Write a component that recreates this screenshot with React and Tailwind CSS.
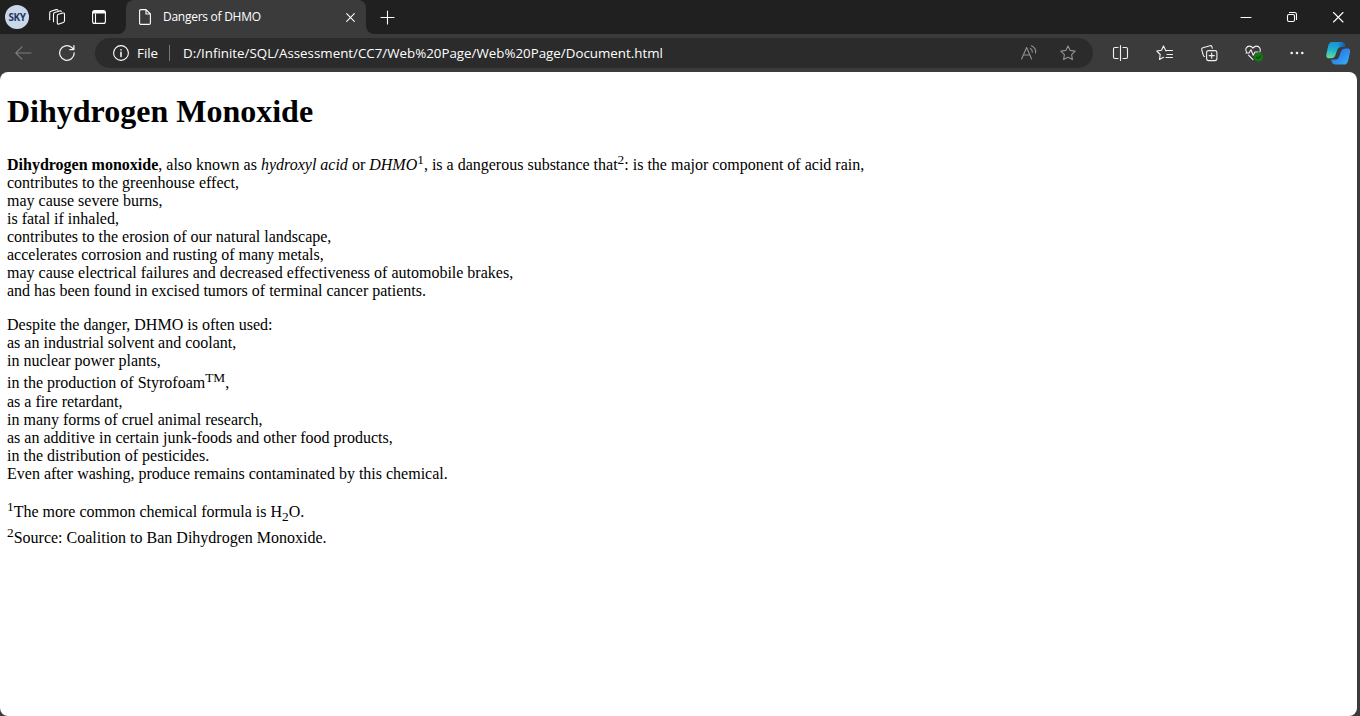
const lineIcon = {
  fill: "none",
  stroke: "currentColor",
  strokeWidth: 1.1,
  strokeLinecap: "round",
  strokeLinejoin: "round",
};

const STAR = "M8 .9 10.2 5.4 15.2 6.1 11.6 9.6 12.4 14.6 8 12.2 3.6 14.6 4.4 9.6 .8 6.1 5.8 5.4Z";
const COPILOT_HALF = "M5.500 0H15.500Q18.500.2 19.200 5H14.500Q12.300 5 11.300 7.800L9.300 13.500Q8.300 16.200 5 16.200H2.500Q0 16 .3 12.500L2.200 4Q3.200.3 5.500 0Z";

function Icon({ children, w = 16, h = 16, className = "" }) {
  return (
    <svg width={w} height={h} viewBox={`0 0 ${w} ${h}`} className={`block shrink-0 overflow-visible ${className}`} {...lineIcon}>
      {children}
    </svg>
  );
}

function TitleBar() {
  return (
    <div className="flex h-[34px] shrink-0 bg-[#202020] text-white">
      <div className="flex w-[126px] shrink-0 items-center pl-[5px]">
        <div className="flex size-6 items-center justify-center rounded-full bg-[#c9d7e9] font-['Open_Sans',sans-serif] text-[10px] font-bold tracking-[-0.4px] text-[#1f3864]">
          SKY
        </div>
        <Icon className="ml-5">
          <path d="M9.300 5.300 14 4Q15.500 3.700 15.500 5.200V11.800Q15.500 13 14.300 13.400L10 15Q8.300 15.500 8.300 13.800V6.700Q8.300 5.600 9.300 5.300Z" />
          <path d="M4.500 12.800V5.200Q4.500 3.900 5.700 3.500L10.700 2Q12 1.700 12.300 2.700M.7 10.700V3.900Q.7 2.600 1.900 2.200L7.200.6Q8.500.2 8.900 1.200" />
        </Icon>
        <Icon w={14} h={14} className="ml-[27px]">
          <rect x=".6" y=".6" width="12.8" height="12.8" rx="2" />
          <path d="M1 1.5Q1 1 2 1H12Q13 1 13 1.500V3.500H1Z" fill="currentColor" stroke="none" />
          <path d="M3.500 4V13" />
        </Icon>
      </div>
      <div className="relative flex w-[240px] shrink-0 items-center rounded-t-lg bg-[#3b3b3b] pl-[13px]">
        <svg width="8" height="8" className="absolute bottom-0 -left-2" fill="#3b3b3b"><path d="M8 0V8H0A8 8 0 0 0 8 0" /></svg>
        <svg width="8" height="8" className="absolute -right-2 bottom-0" fill="#3b3b3b"><path d="M0 0V8H8A8 8 0 0 1 0 0" /></svg>
        <Icon w={12} h={16}>
          <path d="M.6 2Q.6.6 2 .6H7L11.4 5V14Q11.4 15.4 10 15.4H2Q.6 15.4.6 14ZM7 .6V5H11.4" />
        </Icon>
        <span className="ml-3 font-['Open_Sans',sans-serif] text-[12px] leading-4 tracking-[-0.27px] whitespace-nowrap">Dangers of DHMO</span>
        <Icon w={9} h={9} className="mr-[11px] ml-auto">
          <path d="M.7.7 8.3 8.3M8.3.7.7 8.3" />
        </Icon>
      </div>
      <div className="flex flex-1 items-center pl-[15px]">
        <Icon w={13} h={13}><path d="M6.5 0V13M0 6.5H13" /></Icon>
        <div className="ml-auto flex items-center pr-4">
          <Icon w={10} h={10}><path d="M0 5.5H10" /></Icon>
          <Icon w={10} h={10} className="ml-9">
            <rect x=".5" y="2.5" width="7" height="7" rx="1.4" />
            <path d="M2.5.5H7.5Q9.5.5 9.5 2.5V7.5" />
          </Icon>
          <Icon w={11} h={11} className="ml-9"><path d="M.5.5 10 10M10 .5.5 10" /></Icon>
        </div>
      </div>
    </div>
  );
}

function CopilotLogo() {
  return (
    <svg width="25" height="23" viewBox="0 0 25 23" className="ml-[22px] block shrink-0">
      <defs>
        <linearGradient id="left" x1="0.5" y1="0" x2="0.3" y2="1">
          <stop offset="0" stopColor="#1a8fd8" />
          <stop offset=".5" stopColor="#1fb0cf" />
          <stop offset="1" stopColor="#62dc98" />
        </linearGradient>
        <linearGradient id="right" x1="0" y1="0" x2="1" y2="1">
          <stop offset="0" stopColor="#36b4f2" />
          <stop offset=".6" stopColor="#2b83ee" />
          <stop offset="1" stopColor="#1840cc" />
        </linearGradient>
        <linearGradient id="fold" x1="0" y1="0" x2="1" y2="0">
          <stop offset="0" stopColor="#1b9fd4" />
          <stop offset="1" stopColor="#1453b0" />
        </linearGradient>
      </defs>
      <path d={COPILOT_HALF} fill="url(#left)" />
      <path d="M13 0H15.500Q18.500.2 19.200 5H14.500Q12.300 5 11.300 7.800Z" fill="url(#fold)" />
      <path d={COPILOT_HALF} fill="url(#right)" transform="rotate(180 12.200 11.300)" />
    </svg>
  );
}

function Toolbar() {
  return (
    <div className="flex h-[38px] shrink-0 items-center bg-[#3b3b3b] text-[#f2f2f2]">
      <Icon w={16} h={14} className="ml-[15px] text-[#7d7d7d]"><path d="M7 .8.8 7 7 13.200M.8 7H16" /></Icon>
      <Icon className="ml-7">
        <path d="M15.200 8A7.300 7.300 0 1 1 12.500 2.300L14.800 4.500M14.900.6V4.600H10.800" strokeWidth="1.3" />
      </Icon>
      <div className="ml-5 flex h-[30px] w-[998px] shrink-0 items-center rounded-full bg-[#2b2b2b] pl-[18px] font-['Open_Sans',sans-serif] text-[13.330px] text-white">
        <Icon>
          <circle cx="8" cy="8" r="7.400" />
          <path d="M8 7.200V11.500M8 4.800V4.900" strokeWidth="1.500" />
        </Icon>
        <span className="ml-2 w-[32px] pt-px">File</span>
        <span className="h-4 w-px bg-[#777]" />
        <span className="ml-[13px] pt-px whitespace-nowrap">D:/Infinite/SQL/Assessment/CC7/Web%20Page/Web%20Page/Document.html</span>
        <Icon className="ml-auto text-[#929292]">
          <path d="M.6 14 5.600 2.500 10.600 14M2.300 10H8.900M9.500 3.500Q11.400 4.800 11.300 7.200M10.500.8Q15.400 3 14.500 8" />
        </Icon>
        <Icon className="mr-[17px] ml-[23px] text-[#929292]"><path d={STAR} /></Icon>
      </div>
      <Icon className="ml-[19px]">
        <path d="M6 2.500H3Q1.500 2.500 1.500 4V12Q1.500 13.500 3 13.500H6M11 2.500H14Q15.500 2.500 15.500 4V12Q15.500 13.500 14 13.500H11M8.500 .6V15.400" />
      </Icon>
      <Icon w={17} className="ml-7">
        <path d="M10 6 7.500.9 5.500 5.300.8 6 4.200 9.500 3.500 14.500 7.500 12.300M10 5.500H16.500M11 9.500H16.500M10 12.500H16.500" />
      </Icon>
      <Icon w={17} className="ml-7">
        <rect x="5.600" y="5.600" width="10.300" height="10" rx="2" />
        <path d="M10.700 8V13.200M8.100 10.600H13.300M3.600 11.500Q2.500 11.500 2.200 10L.7 4.600Q.4 3.200 1.800 2.700L9 .7Q10.500.4 10.900 1.700L11.300 3.300" />
      </Icon>
      <Icon w={18} className="ml-[27px]">
        <path d="M1.600 7Q0 5.600 1.100 3.200C2.600.4 6.200.5 8 3.100C9.800.5 13.400.4 14.900 3.200Q15.800 5.200 14.900 7M1 8H4L6 4.800 8.200 10.300 10 7H13M3.500 10.200 8 14.700" />
        <circle cx="13.500" cy="12" r="4.500" fill="#107c10" stroke="none" />
        <path d="M11.500 12 13 13.500 15.800 10.800" stroke="#173f17" />
      </Icon>
      <Icon w={14} h={4} className="ml-[27px]">
        <g fill="currentColor" stroke="none"><circle cx="1.700" cy="2" r="1.300" /><circle cx="7" cy="2" r="1.300" /><circle cx="12.300" cy="2" r="1.300" /></g>
      </Icon>
      <CopilotLogo />
    </div>
  );
}

function Sup({ children }) {
  return <sup className="top-0 align-super text-[13.333px] leading-0 not-italic">{children}</sup>;
}

function Document() {
  return (
    <main className="mr-[3px] flex-1 rounded-lg bg-white pt-[21px] pl-[7px] font-['Liberation_Serif',serif] text-[16px] leading-[18px] whitespace-nowrap text-black">
      <h1 className="text-[32px] leading-9 font-bold">Dihydrogen Monoxide</h1>
      <div className="mt-[27px]">
        <p><b>Dihydrogen monoxide</b>, also known as <i>hydroxyl acid</i> or <i>DHMO</i><Sup>1</Sup>, is a dangerous substance that<Sup>2</Sup>: is the major component of acid rain,</p>
        <p>contributes to the greenhouse effect,</p>
        <p>may cause severe burns,</p>
        <p>is fatal if inhaled,</p>
        <p>contributes to the erosion of our natural landscape,</p>
        <p>accelerates corrosion and rusting of many metals,</p>
        <p>may cause electrical failures and decreased effectiveness of automobile brakes,</p>
        <p>and has been found in excised tumors of terminal cancer patients.</p>
      </div>
      <div className="mt-4">
        <p>Despite the danger, DHMO is often used:</p>
        <p>as an industrial solvent and coolant,</p>
        <p>in nuclear power plants,</p>
        <p className="pt-1">in the production of Styrofoam<Sup>TM</Sup>,</p>
        <p className="pt-px">as a fire retardant,</p>
        <p>in many forms of cruel animal research,</p>
        <p>as an additive in certain junk-foods and other food products,</p>
        <p>in the distribution of pesticides.</p>
        <p>Even after washing, produce remains contaminated by this chemical.</p>
      </div>
      <div className="mt-5">
        <p><Sup>1</Sup>The more common chemical formula is H<sub className="bottom-0 align-sub text-[13.333px] leading-0">2</sub>O.</p>
        <p className="mt-2"><Sup>2</Sup>Source: Coalition to Ban Dihydrogen Monoxide.</p>
      </div>
    </main>
  );
}

export default function App() {
  return (
    <div className="flex h-[716px] w-[1360px] flex-col overflow-hidden bg-[#3b3b3b]">
      <TitleBar />
      <Toolbar />
      <Document />
    </div>
  );
}
